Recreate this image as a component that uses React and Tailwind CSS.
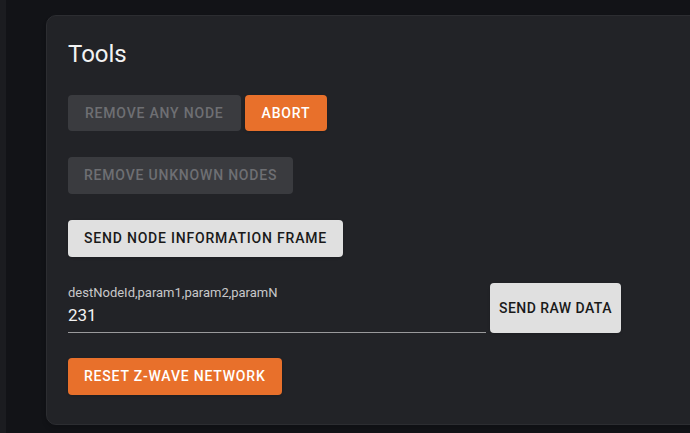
export default function App() {
  return (
    <div className="flex h-[433px] w-[690px] overflow-hidden bg-[#121317] font-['Roboto',sans-serif]">
      <div className="w-[6px] shrink-0 bg-[#1b1c20]" />
      <div className="flex-1 pl-[40px] pt-[15px]">
        <div className="h-[410px] w-[700px] rounded-[10px] border border-[#2c2d31] bg-[#222327] pl-[21px] pt-[22px] shadow-md">
          <h2 className="text-[24px] leading-[32px] text-[#f2f2f2]">Tools</h2>

          <div className="mt-[25px] flex gap-[4px]">
            <button className="h-[36px] rounded-[4px] bg-[#3a3b3f] px-[17px] text-[14px] font-medium tracking-[0.8px] text-[#6e6f73]">
              REMOVE ANY NODE
            </button>
            <button className="h-[36px] rounded-[4px] bg-[#e8702b] px-[17px] text-[14px] font-medium tracking-[0.8px] text-white shadow">
              ABORT
            </button>
          </div>

          <div className="mt-[26px] flex">
            <button className="h-[37px] rounded-[4px] bg-[#3a3b3f] px-[16px] text-[14px] font-medium tracking-[0.8px] text-[#6e6f73]">
              REMOVE UNKNOWN NODES
            </button>
          </div>

          <div className="mt-[26px] flex">
            <button className="h-[37px] rounded-[4px] bg-[#e0e0e0] px-[16px] text-[14px] font-medium tracking-[0.8px] text-[#1a1a1a] shadow">
              SEND NODE INFORMATION FRAME
            </button>
          </div>

          <div className="mt-[26px] flex items-start gap-[4px]">
            <div className="w-[418px] border-b border-[#9a9a9c] pt-[1px]">
              <div className="text-[13px] leading-[17px] text-[#c8c8ca]">
                destNodeId,param1,param2,paramN
              </div>
              <div className="pb-[6px] pt-[3px] text-[17px] leading-[22px] text-[#f2f2f2]">
                231
              </div>
            </div>
            <button className="h-[50px] rounded-[4px] bg-[#e0e0e0] px-[9px] text-[14px] font-medium tracking-[0.45px] text-[#1a1a1a] shadow">
              SEND RAW DATA
            </button>
          </div>

          <div className="mt-[25px] flex">
            <button className="h-[37px] rounded-[4px] bg-[#e8702b] px-[16px] text-[14px] font-medium tracking-[0.8px] text-white shadow">
              RESET Z-WAVE NETWORK
            </button>
          </div>
        </div>
      </div>
    </div>
  );
}
